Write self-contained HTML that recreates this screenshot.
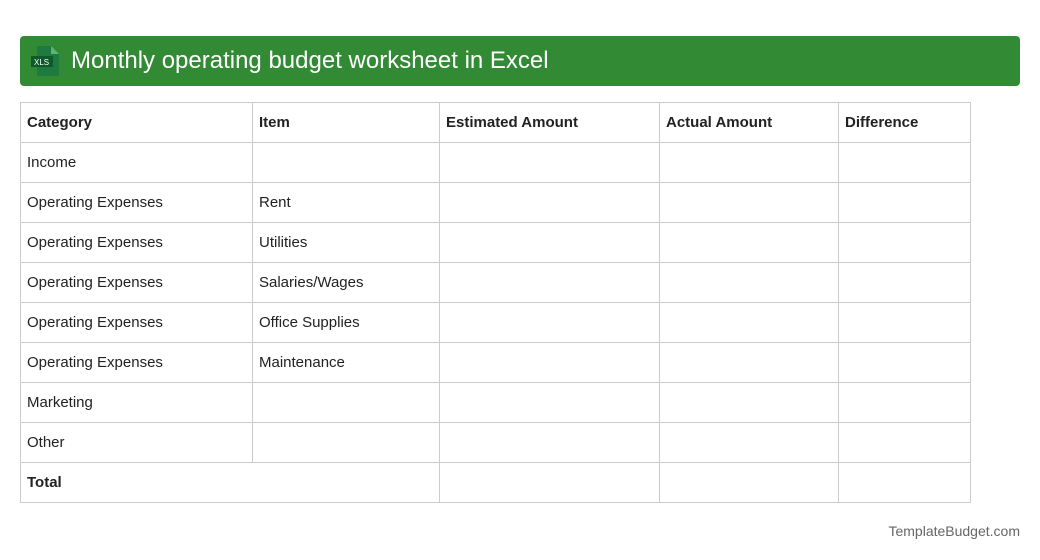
<!DOCTYPE html>
<html><head><style>
body{margin:0;background:#fff;width:1040px;height:560px;position:relative;font-family:"Liberation Sans",Roboto,sans-serif;color:#222}
.hdr{position:absolute;left:20px;top:36px;width:1000px;height:50px;background:#328a35;border-radius:4px}
.hdr span{position:absolute;left:51px;top:11px;font-size:24px;color:#fff}
table{position:absolute;left:20px;top:102px;width:950px;table-layout:fixed;border-collapse:collapse;font-size:15px}
td,th{border:1px solid #ccc;height:40px;padding:0 0 0 6px;box-sizing:border-box;white-space:nowrap;overflow:hidden}
th{text-align:left;font-weight:bold}
.ft{position:absolute;right:20px;top:523px;font-size:14px;color:#666}
</style></head><body>
<div class="hdr">
<svg style="position:absolute;left:11px;top:10px" width="28" height="30" viewBox="0 0 28 30">
<path d="M6 0H20L28 8V30H6Z" fill="#1e7a3e"/><path d="M20 0V8H28Z" fill="#5fb37a"/>
<rect x="0" y="10" width="22" height="11" fill="#0f5a2a"/>
<text x="3" y="19" font-size="8" fill="#fff" font-family="Liberation Sans">XLS</text></svg>
<span>Monthly operating budget worksheet in Excel</span></div>
<table>
<colgroup><col style="width:232px"><col style="width:187px"><col style="width:220px"><col style="width:179px"><col style="width:132px"></colgroup>
<tr><th>Category</th><th>Item</th><th>Estimated Amount</th><th>Actual Amount</th><th>Difference</th></tr>
<tr><td>Income</td><td></td><td></td><td></td><td></td></tr>
<tr><td>Operating Expenses</td><td>Rent</td><td></td><td></td><td></td></tr>
<tr><td>Operating Expenses</td><td>Utilities</td><td></td><td></td><td></td></tr>
<tr><td>Operating Expenses</td><td>Salaries/Wages</td><td></td><td></td><td></td></tr>
<tr><td>Operating Expenses</td><td>Office Supplies</td><td></td><td></td><td></td></tr>
<tr><td>Operating Expenses</td><td>Maintenance</td><td></td><td></td><td></td></tr>
<tr><td>Marketing</td><td></td><td></td><td></td><td></td></tr>
<tr><td>Other</td><td></td><td></td><td></td><td></td></tr>
<tr><td colspan="2"><b>Total</b></td><td></td><td></td><td></td></tr>
</table>
<div class="ft">TemplateBudget.com</div>
</body></html>
